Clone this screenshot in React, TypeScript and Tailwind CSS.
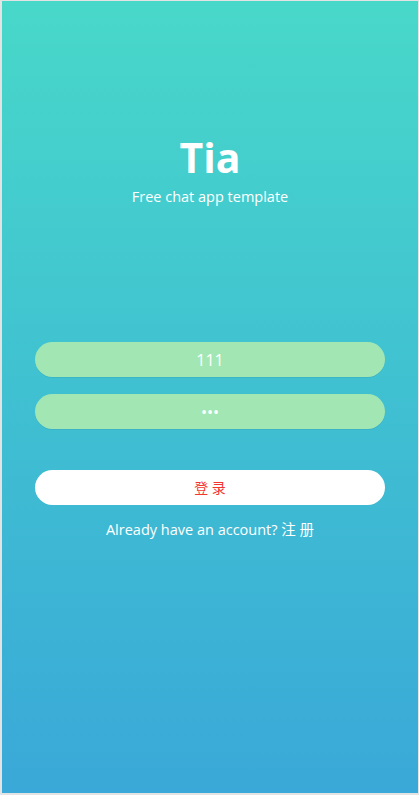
export default function App() {
  return (
    <div className="h-[795px] w-[419px] bg-[#e3e3e3] pl-[2px] pr-[1px] pt-[1px] pb-[2px]">
      <div
        className="flex h-full w-full flex-col items-center bg-gradient-to-b from-[#48d8c9] to-[#3aa8d8] text-white"
        style={{ fontFamily: '"Open Sans", "Noto Sans CJK SC", sans-serif' }}
      >
        <h1 className="mt-[128px] text-[41px] font-bold leading-[56px]">Tia</h1>
        <p className="mt-[2px] text-[14.5px] leading-[20px]">Free chat app template</p>

        <form className="mt-[135px] flex w-[350px] flex-col">
          <input
            className="h-[35px] w-full rounded-full bg-[#a2e7b3] text-center text-[16px] text-white shadow-[0_1px_0_rgba(0,0,0,0.06)] outline-none"
            defaultValue="111"
            type="text"
          />
          <input
            className="mt-[17px] h-[35px] w-full rounded-full bg-[#a2e7b3] text-center text-[16px] text-white shadow-[0_1px_0_rgba(0,0,0,0.06)] outline-none"
            defaultValue="111"
            type="password"
          />
          <button
            type="button"
            className="mt-[41px] h-[35px] w-full rounded-full bg-white text-[14px] text-[#f2362f]"
          >
            登 录
          </button>
        </form>
        <p className="mt-[15px] text-[14.5px] leading-[20px]">Already have an account? 注 册</p>
      </div>
    </div>
  )
}
